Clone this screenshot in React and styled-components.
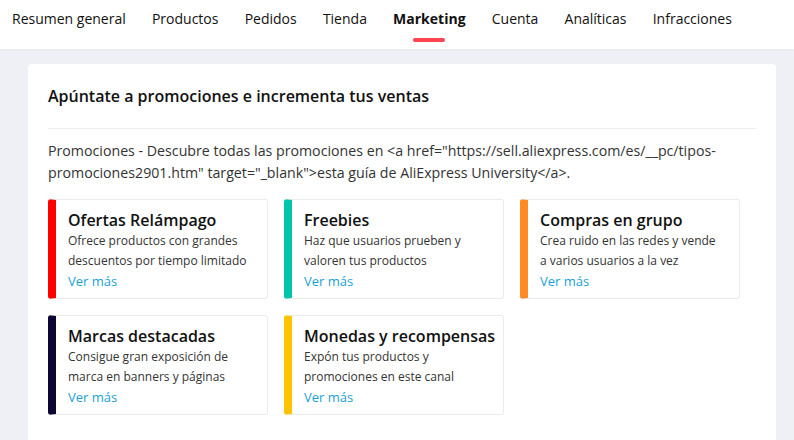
import React from "react";
import styled, { createGlobalStyle } from "styled-components";

const tabs = [
  "Resumen general",
  "Productos",
  "Pedidos",
  "Tienda",
  "Marketing",
  "Cuenta",
  "Analíticas",
  "Infracciones",
];

const promos = [
  {
    title: "Ofertas Relámpago",
    text: "Ofrece productos con grandes descuentos por tiempo limitado",
    color: "#ff0000",
  },
  {
    title: "Freebies",
    text: "Haz que usuarios prueben y valoren tus productos",
    color: "#00c6a9",
  },
  {
    title: "Compras en grupo",
    text: "Crea ruido en las redes y vende a varios usuarios a la vez",
    color: "#ff8b22",
  },
  {
    title: "Marcas destacadas",
    text: "Consigue gran exposición de marca en banners y páginas",
    color: "#0d0534",
  },
  {
    title: "Monedas y recompensas",
    text: "Expón tus productos y promociones en este canal",
    color: "#ffc400",
  },
];

const App = () => {
  return (
    <Page>
      <GlobalStyle />
      <Nav>
        {tabs.map((t) => (
          <Tab key={t} active={t === "Marketing"}>
            {t}
          </Tab>
        ))}
      </Nav>
      <Body>
        <Panel>
          <Title>Apúntate a promociones e incrementa tus ventas</Title>
          <Intro>
            Promociones - Descubre todas las promociones en &lt;a
            href="https://sell.aliexpress.com/es/__pc/tipos-promociones2901.htm"
            target="_blank"&gt;esta guía de AliExpress University&lt;/a&gt;.
          </Intro>
          <Grid>
            {promos.map((p) => (
              <Card key={p.title} color={p.color}>
                <CardTitle>{p.title}</CardTitle>
                <CardText>{p.text}</CardText>
                <More>Ver más</More>
              </Card>
            ))}
          </Grid>
        </Panel>
      </Body>
    </Page>
  );
};

export default App;

const GlobalStyle = createGlobalStyle`
  body {
    margin: 0;
    font-family: "Open Sans", "Liberation Sans", sans-serif;
    background: #eff0f5;
    color: #111;
  }
`;

const Page = styled.div`
  width: 794px;
  height: 440px;
  overflow: hidden;
  background: #eff0f5;
`;

const Nav = styled.nav`
  height: 49px;
  background: #fff;
  display: flex;
  gap: 26.2px;
  padding-left: 12px;
  box-shadow: 0 1px 2px rgba(0, 0, 0, 0.04);
`;

const Tab = styled.div`
  position: relative;
  font-size: 14px;
  line-height: 20px;
  padding-top: 9px;
  white-space: nowrap;
  color: #111;
  font-weight: ${(p) => (p.active ? 700 : 400)};

  &::after {
    content: "";
    display: ${(p) => (p.active ? "block" : "none")};
    position: absolute;
    left: 50%;
    top: 38px;
    width: 32px;
    height: 4px;
    margin-left: -16px;
    border-radius: 2px;
    background: #ff4450;
  }
`;

const Body = styled.div`
  padding: 15px 18px 0 28px;
`;

const Panel = styled.div`
  background: #fff;
  border-radius: 4px;
  padding: 20px 20px 24px;
  min-height: 400px;
`;

const Title = styled.h2`
  margin: 0;
  font-size: 16px;
  line-height: 24px;
  font-weight: 600;
  color: #111;
  padding-bottom: 20px;
  border-bottom: 1px solid #ececef;
`;

const Intro = styled.p`
  margin: 11px 0 15px;
  font-size: 14.2px;
  line-height: 22px;
  color: #333;
`;

const Grid = styled.div`
  display: grid;
  grid-template-columns: repeat(3, 220px);
  gap: 16px;
`;

const Card = styled.div`
  height: 100px;
  box-sizing: border-box;
  border: 1px solid #ebebeb;
  border-left: 8px solid ${(p) => p.color};
  border-radius: 3px;
  padding: 9px 4px 0 12px;
  display: flex;
  flex-direction: column;
`;

const CardTitle = styled.div`
  font-size: 16px;
  line-height: 22px;
  font-weight: 600;
  color: #111;
  white-space: nowrap;
`;

const CardText = styled.div`
  font-size: 12px;
  line-height: 20px;
  color: #333;
  padding-right: 14px;
`;

const More = styled.a`
  font-size: 13px;
  line-height: 20px;
  color: #1a9fd6;
  cursor: pointer;
`;
